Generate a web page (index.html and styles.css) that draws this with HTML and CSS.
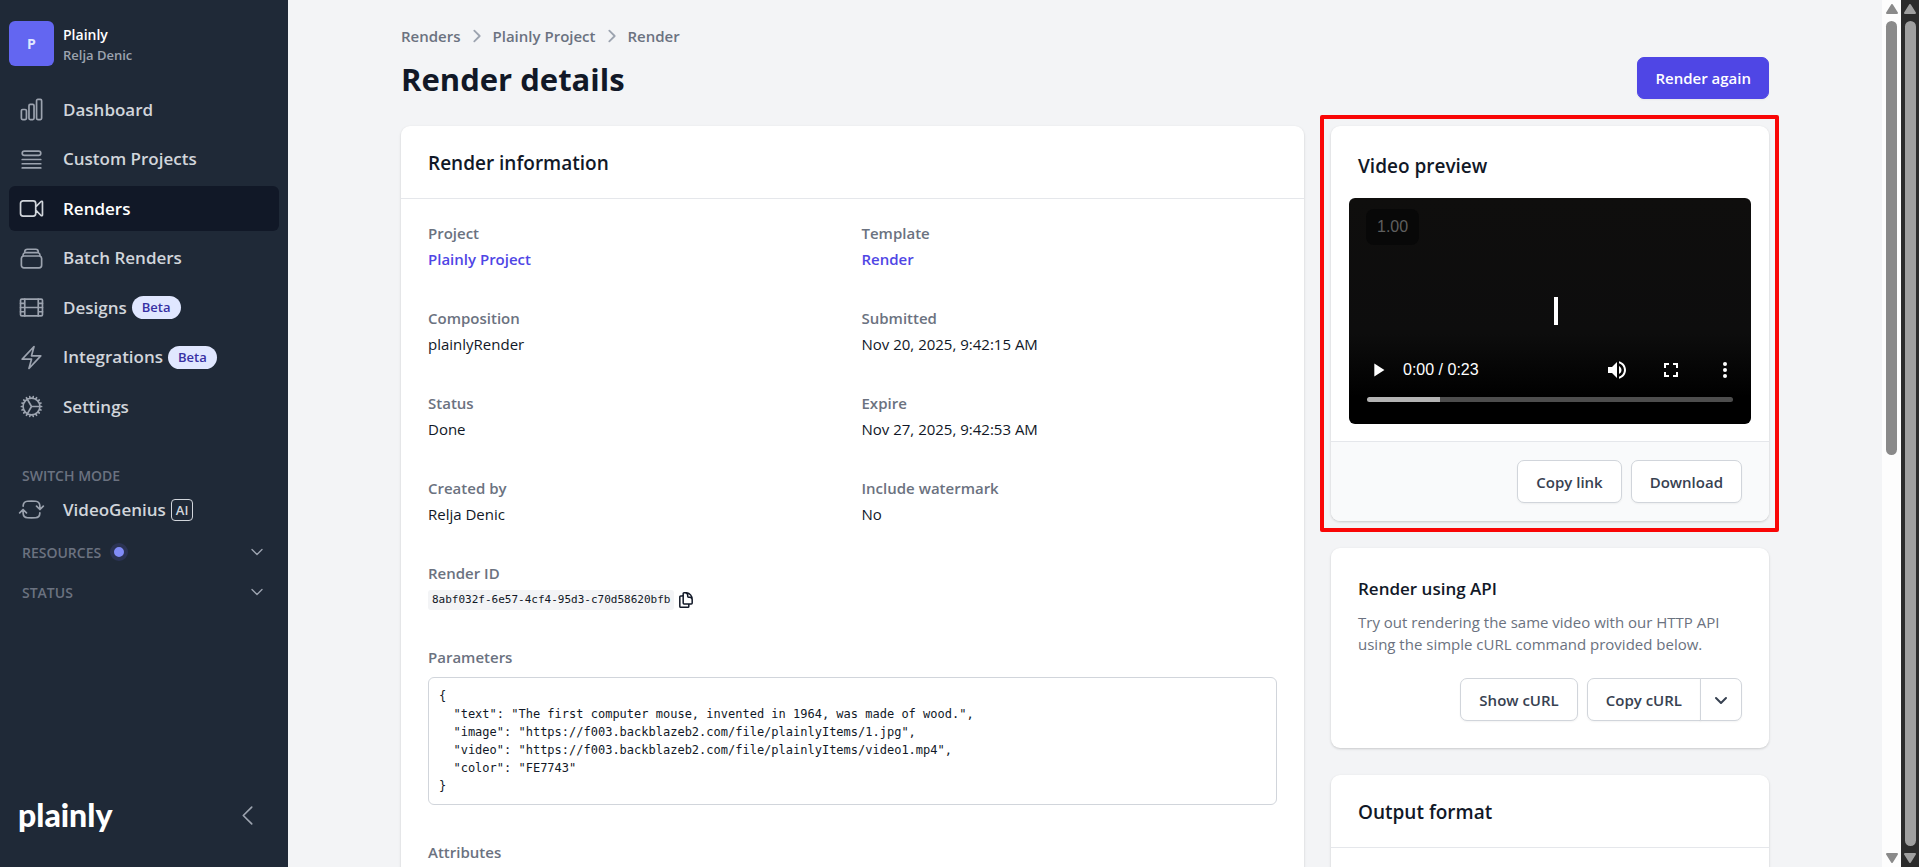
FILE: index.html
```html
<!DOCTYPE html>
<html lang="en">
<head>
<meta charset="utf-8">
<title>Render details</title>
<meta name="viewport" content="width=device-width, initial-scale=1">
<link rel="stylesheet" href="styles.css">
</head>
<body class="app">
<aside class="sidebar">
  <div class="account">
    <span class="avatar">P</span>
    <div>
      <div class="account-name">Plainly</div>
      <div class="account-user">Relja Denic</div>
    </div>
  </div>
  <nav class="nav">
    <a class="nav-item" href="#"><svg class="icon" viewBox="0 0 24 24"><path d="M3 13.125C3 12.504 3.504 12 4.125 12h2.25c.621 0 1.125.504 1.125 1.125v6.75C7.5 20.496 6.996 21 6.375 21h-2.25A1.125 1.125 0 0 1 3 19.875v-6.75ZM9.75 8.625c0-.621.504-1.125 1.125-1.125h2.25c.621 0 1.125.504 1.125 1.125v11.25c0 .621-.504 1.125-1.125 1.125h-2.25a1.125 1.125 0 0 1-1.125-1.125V8.625ZM16.5 4.125c0-.621.504-1.125 1.125-1.125h2.25C20.496 3 21 3.504 21 4.125v15.75c0 .621-.504 1.125-1.125 1.125h-2.25a1.125 1.125 0 0 1-1.125-1.125V4.125Z"/></svg>Dashboard</a>
    <a class="nav-item" href="#"><svg class="icon" viewBox="0 0 24 24"><path d="M3.75 12h16.5m-16.5 3.75h16.5M3.75 19.5h16.5M5.625 4.5h12.75a1.875 1.875 0 0 1 0 3.75H5.625a1.875 1.875 0 0 1 0-3.75Z"/></svg>Custom Projects</a>
    <a class="nav-item nav-active" href="#"><svg class="icon" viewBox="0 0 24 24"><path d="m15.75 10.5 4.72-4.72a.75.75 0 0 1 1.28.53v11.38a.75.75 0 0 1-1.28.53l-4.72-4.72M4.5 18.75h9a2.25 2.25 0 0 0 2.25-2.25v-9a2.25 2.25 0 0 0-2.25-2.25h-9A2.25 2.25 0 0 0 2.25 7.5v9a2.25 2.25 0 0 0 2.25 2.25Z"/></svg>Renders</a>
    <a class="nav-item" href="#"><svg class="icon" viewBox="0 0 24 24"><path d="M6 6.878V6a2.25 2.25 0 0 1 2.25-2.25h7.5A2.25 2.25 0 0 1 18 6v.878m-12 0c.235-.083.487-.128.75-.128h10.5c.263 0 .515.045.75.128m-12 0A2.25 2.25 0 0 0 4.5 9v.878m13.5-3A2.25 2.25 0 0 1 19.5 9v.878m0 0a2.246 2.246 0 0 0-.75-.128H5.25c-.263 0-.515.045-.75.128m15 0A2.25 2.25 0 0 1 21 12v6a2.25 2.25 0 0 1-2.25 2.25H5.25A2.25 2.25 0 0 1 3 18v-6c0-.98.626-1.813 1.5-2.122"/></svg>Batch Renders</a>
    <a class="nav-item" href="#"><svg class="icon" viewBox="0 0 24 24"><rect x="2.25" y="4.5" width="19.5" height="15" rx="1.125"/><path d="M6 4.5v15M18 4.5v15M6 12h12M2.25 8.25H6M2.25 12H6M2.25 15.75H6M18 8.25h3.75M18 12h3.75M18 15.75h3.75"/></svg>Designs<span class="badge">Beta</span></a>
    <a class="nav-item" href="#"><svg class="icon" viewBox="0 0 24 24"><path d="m3.75 13.5 10.5-11.25L12 10.5h8.25L9.75 21.75 12 13.5H3.75Z"/></svg>Integrations<span class="badge">Beta</span></a>
    <a class="nav-item" href="#"><svg class="icon" viewBox="0 0 24 24"><path d="M4.5 12a7.5 7.5 0 0 0 15 0m-15 0a7.5 7.5 0 1 1 15 0m-15 0H3m16.5 0H21m-1.5 0H12m-8.457 3.077 1.41-.513m14.095-5.13 1.41-.513M5.106 17.785l1.15-.964m11.49-9.642 1.149-.964M7.501 19.795l.75-1.3m7.5-12.99.75-1.3m-6.063 16.658.26-1.477m2.605-14.772.26-1.477m0 17.726-.26-1.477M10.698 4.614l-.26-1.477M16.5 19.794l-.75-1.299M7.5 4.205 12 12m6.894 5.785-1.149-.964M6.256 7.178l-1.15-.964m15.352 8.864-1.41-.513M4.954 9.435l-1.41-.514M12.002 12l-3.75 6.495"/></svg>Settings</a>
  </nav>
  <div class="side-heading">SWITCH MODE</div>
  <a class="nav-item" href="#"><svg class="icon" viewBox="0 0 24 24"><path d="M19.5 12c0-1.232-.046-2.453-.138-3.662a4.006 4.006 0 0 0-3.7-3.7 48.678 48.678 0 0 0-7.324 0 4.006 4.006 0 0 0-3.7 3.7c-.017.22-.032.441-.046.662M19.5 12l3-3m-3 3-3-3m-12 3c0 1.232.046 2.453.138 3.662a4.006 4.006 0 0 0 3.7 3.7 48.656 48.656 0 0 0 7.324 0 4.006 4.006 0 0 0 3.7-3.7c.017-.22.032-.441.046-.662M4.5 12l3 3m-3-3-3 3"/></svg>VideoGenius<span class="ai">AI</span></a>
  <button class="side-toggle" type="button">RESOURCES<span class="dot"></span><svg class="chevron" viewBox="0 0 24 24"><path d="m19.5 8.25-7.5 7.5-7.5-7.5"/></svg></button>
  <button class="side-toggle" type="button">STATUS<svg class="chevron" viewBox="0 0 24 24"><path d="m19.5 8.25-7.5 7.5-7.5-7.5"/></svg></button>
  <div class="side-foot">
    <span class="logo">plainly</span>
    <button class="collapse" type="button" aria-label="Collapse sidebar"><svg class="icon" viewBox="0 0 24 24"><path d="M15.75 19.5 8.25 12l7.5-7.5"/></svg></button>
  </div>
</aside>

<main class="main">
  <div class="content">
    <nav class="crumbs" aria-label="Breadcrumb">
      <a href="#">Renders</a>
      <svg class="crumb-sep" viewBox="0 0 20 20"><path d="m7 4 6 6-6 6"/></svg>
      <a href="#">Plainly Project</a>
      <svg class="crumb-sep" viewBox="0 0 20 20"><path d="m7 4 6 6-6 6"/></svg>
      <a href="#">Render</a>
    </nav>
    <header class="page-head">
      <h1 class="title">Render details</h1>
      <button class="btn btn-primary" type="button">Render again</button>
    </header>
    <div class="columns">
      <section class="card">
        <h2 class="card-head">Render information</h2>
        <dl class="facts">
          <div><dt>Project</dt><dd><a class="link" href="#">Plainly Project</a></dd></div>
          <div><dt>Template</dt><dd><a class="link" href="#">Render</a></dd></div>
          <div><dt>Composition</dt><dd>plainlyRender</dd></div>
          <div><dt>Submitted</dt><dd>Nov 20, 2025, 9:42:15 AM</dd></div>
          <div><dt>Status</dt><dd>Done</dd></div>
          <div><dt>Expire</dt><dd>Nov 27, 2025, 9:42:53 AM</dd></div>
          <div><dt>Created by</dt><dd>Relja Denic</dd></div>
          <div><dt>Include watermark</dt><dd>No</dd></div>
          <div class="wide"><dt>Render ID</dt><dd class="id-row"><code class="id">8abf032f-6e57-4cf4-95d3-c70d58620bfb</code><button class="copy" type="button" aria-label="Copy render ID"><svg viewBox="0 0 24 24"><path d="M15.75 17.25v3.375c0 .621-.504 1.125-1.125 1.125h-9.75a1.125 1.125 0 0 1-1.125-1.125V7.875c0-.621.504-1.125 1.125-1.125H6.75a9.06 9.06 0 0 1 1.5.124m7.5 10.376h3.375c.621 0 1.125-.504 1.125-1.125V11.25c0-4.46-3.243-8.161-7.5-8.876a9.06 9.06 0 0 0-1.5-.124H9.375c-.621 0-1.125.504-1.125 1.125v3.5m7.5 10.375H9.375a1.125 1.125 0 0 1-1.125-1.125v-9.25m12 6.625v-1.875a3.375 3.375 0 0 0-3.375-3.375h-1.5a1.125 1.125 0 0 1-1.125-1.125v-1.5a3.375 3.375 0 0 0-3.375-3.375H9.75"/></svg></button></dd></div>
          <div class="wide"><dt>Parameters</dt><dd><pre class="code">{
  "text": "The first computer mouse, invented in 1964, was made of wood.",
  "image": "https://f003.backblazeb2.com/file/plainlyItems/1.jpg",
  "video": "https://f003.backblazeb2.com/file/plainlyItems/video1.mp4",
  "color": "FE7743"
}</pre></dd></div>
          <div class="wide"><dt>Attributes</dt></div>
        </dl>
      </section>

      <div class="side">
        <section class="card highlighted">
          <h2 class="video-title">Video preview</h2>
          <div class="player">
            <span class="speed">1.00</span>
            <span class="caret"></span>
            <div class="controls">
              <button class="ctl play" type="button" aria-label="Play"><svg viewBox="0 0 24 24"><path d="M8 5v14l11-7z"/></svg></button>
              <span class="time">0:00 / 0:23</span>
              <button class="ctl" type="button" aria-label="Mute"><svg viewBox="0 0 24 24"><path d="M3 9v6h4l5 5V4L7 9H3zm13.5 3c0-1.77-1.02-3.29-2.5-4.03v8.05c1.48-.73 2.5-2.25 2.5-4.02zM14 3.23v2.06c2.89.86 5 3.54 5 6.71s-2.11 5.85-5 6.71v2.06c4.01-.91 7-4.49 7-8.77s-2.99-7.86-7-8.77z"/></svg></button>
              <button class="ctl" type="button" aria-label="Full screen"><svg viewBox="0 0 24 24"><path d="M7 14H5v5h5v-2H7v-3zm-2-4h2V7h3V5H5v5zm12 7h-3v2h5v-5h-2v3zM14 5v2h3v3h2V5h-5z"/></svg></button>
              <button class="ctl" type="button" aria-label="More options"><svg viewBox="0 0 24 24"><circle cx="12" cy="6" r="2"/><circle cx="12" cy="12" r="2"/><circle cx="12" cy="18" r="2"/></svg></button>
            </div>
            <input class="seek" type="range" min="0" max="23" value="0" aria-label="Seek">
          </div>
          <footer class="card-foot">
            <button class="btn" type="button">Copy link</button>
            <button class="btn" type="button">Download</button>
          </footer>
        </section>

        <section class="card api">
          <h3 class="api-title">Render using API</h3>
          <p class="api-text">Try out rendering the same video with our HTTP API using the simple cURL command provided below.</p>
          <div class="actions">
            <button class="btn" type="button">Show cURL</button>
            <div class="split">
              <button class="btn" type="button">Copy cURL</button>
              <button class="btn btn-more" type="button" aria-label="More copy options"><svg viewBox="0 0 20 20"><path d="m5 8 5 5 5-5"/></svg></button>
            </div>
          </div>
        </section>

        <section class="card output">
          <h2 class="card-head">Output format</h2>
        </section>
      </div>
    </div>
  </div>
</main>

<div class="scroll scroll-inner" aria-hidden="true">
  <svg class="arrow" viewBox="0 0 12 10"><path d="M6 1 11 9H1z"/></svg>
  <div class="track"><div class="thumb"></div></div>
  <svg class="arrow" viewBox="0 0 12 10"><path d="M6 9 1 1h10z"/></svg>
</div>
<div class="scroll scroll-outer" aria-hidden="true">
  <svg class="arrow" viewBox="0 0 12 10"><path d="M6 1 11 9H1z"/></svg>
  <div class="track"><div class="thumb"></div></div>
  <svg class="arrow" viewBox="0 0 12 10"><path d="M6 9 1 1h10z"/></svg>
</div>
</body>
</html>
```
FILE: styles.css
```css
*, *::before, *::after { box-sizing: border-box; }
h1, h2, h3, p, dl, dd, pre { margin: 0; }
a { color: inherit; text-decoration: none; }
button { font: inherit; color: inherit; background: none; border: 0; padding: 0; cursor: pointer; }
svg { display: block; flex: none; }

.app {
  margin: 0;
  display: flex;
  height: 100vh;
  overflow: hidden;
  background: #f3f4f6;
  color: #111827;
  font-family: "Open Sans", "Noto Sans", sans-serif;
  font-size: 15px;
  line-height: 22px;
}

/* Sidebar */
.sidebar {
  flex: none;
  width: 288px;
  padding: 21px 9px 27px;
  display: flex;
  flex-direction: column;
  background: #1f2937;
  color: #d1d5db;
  font-weight: 600;
}
.account { display: flex; align-items: center; gap: 9px; margin-bottom: 21px; }
.account > div { padding-top: 2px; }
.avatar {
  width: 45px; height: 45px; border-radius: 6px;
  display: grid; place-items: center;
  background: #6366f1; color: #e0e7ff; font-size: 14px; font-weight: 700;
}
.account-name { color: #fff; font-size: 14px; line-height: 20px; }
.account-user { color: #9ca3af; font-size: 13px; line-height: 20px; }
.nav { display: flex; flex-direction: column; justify-content: space-between; min-height: 342px; margin-bottom: 35px; }
.nav-item {
  display: flex; align-items: center;
  height: 45px; padding: 0 9px; border-radius: 6px;
  font-size: 17px;
}
.nav-active { background: #111827; color: #fff; }
.icon { width: 27px; height: 27px; margin-right: 18px; fill: none; stroke: #9ca3af; stroke-width: 1.5; stroke-linecap: round; stroke-linejoin: round; }
.nav-active .icon { stroke: #d1d5db; }
.badge {
  margin-left: 5px; padding: 0 10px; border-radius: 12px;
  background: #e0e7ff; color: #3730a3;
  font-size: 13px; line-height: 23px;
}
.ai { margin-left: 5px; padding: 0 4px; border: 1px solid #d1d5db; border-radius: 4px; font-size: 13px; line-height: 20px; }
.side-heading, .side-toggle { padding-left: 13px; color: #6b7280; font-size: 14px; line-height: 23px; font-weight: 600; }
.side-toggle { display: flex; align-items: center; height: 40px; padding-right: 14px; text-align: left; }
.dot { width: 18px; height: 18px; margin-left: 9px; border: 4px solid #2b3353; border-radius: 50%; background: #818cf8; }
.chevron { width: 16px; height: 16px; margin-left: auto; fill: none; stroke: #9ca3af; stroke-width: 2; stroke-linecap: round; stroke-linejoin: round; }
.side-foot { margin-top: auto; padding: 0 9px; display: flex; align-items: center; justify-content: space-between; }
.logo { color: #fff; font: 900 32px/50px Lato, "Open Sans", sans-serif; }
.collapse { padding: 0 9px 0 0; }
.collapse .icon { margin: 0; }

/* Page */
.main { flex: 1; min-width: 0; padding: 25px 36px; overflow: hidden; }
.content { max-width: 1368px; margin: 0 auto; }
.crumbs { display: flex; align-items: center; gap: 7px; color: #6b7280; font-weight: 600; }
.crumb-sep { width: 18px; height: 18px; fill: none; stroke: #9ca3af; stroke-width: 2; stroke-linecap: round; stroke-linejoin: round; }
.page-head { display: flex; align-items: center; justify-content: space-between; margin: 10px 0 27px; }
.title { padding-top: 2px; font-size: 31px; line-height: 40px; font-weight: 700; }
.btn {
  height: 43px; padding: 0 18px;
  border: 1px solid #d1d5db; border-radius: 7px;
  background: #fff; color: #374151;
  font-size: 15px; font-weight: 600; white-space: nowrap;
  box-shadow: 0 1px 2px rgba(0, 0, 0, .05);
}
.btn-primary { height: 42px; padding: 0 17px; background: #4f46e5; border-color: #4f46e5; color: #fff; }
.columns { display: grid; grid-template-columns: repeat(3, 1fr); gap: 27px; align-items: start; }
.columns > .card { grid-column: span 2; min-height: 900px; }
.side { display: flex; flex-direction: column; gap: 27px; }
.card { background: #fff; border-radius: 9px; box-shadow: 0 1px 3px rgba(0, 0, 0, .12), 0 1px 2px rgba(0, 0, 0, .06); }
.card-head { padding: 24px 27px 21px; border-bottom: 1px solid #e5e7eb; font-size: 19px; line-height: 27px; font-weight: 600; }

.facts { display: grid; grid-template-columns: 1fr 1fr; gap: 36px 18px; padding: 23px 27px; }
.wide { grid-column: 1 / -1; }
.facts dt { color: #6b7280; font-weight: 600; line-height: 22px; margin-bottom: 4px; }
.facts dd { font-weight: 500; line-height: 23px; }
.facts .link { color: #4f46e5; font-weight: 600; }
.id-row { display: flex; align-items: center; gap: 3px; padding-top: 2px; }
.id { padding: 0 4px; background: #f3f4f6; border-radius: 3px; font: 11px/20px "DejaVu Sans Mono", monospace; }
.copy svg { width: 18px; height: 18px; fill: none; stroke: #111827; stroke-width: 2; stroke-linejoin: round; stroke-linecap: round; }
.code { margin-top: 9px; padding: 9px 10px; border: 1px solid #d1d5db; border-radius: 6px; font: 12px/18px "DejaVu Sans Mono", monospace; }

/* Video card */
.highlighted { position: relative; }
.highlighted::after { content: ""; position: absolute; inset: -11px -10px -11px -11px; border: 4px solid #f90606; border-radius: 2px; pointer-events: none; }
.video-title { padding: 27px 27px 18px; font-size: 19px; line-height: 27px; font-weight: 600; }
.player {
  position: relative;
  margin: 0 18px 17px; aspect-ratio: 402 / 226; padding: 0 18px 18px;
  display: flex; flex-direction: column; justify-content: flex-end;
  border-radius: 6px; overflow: hidden;
  background: linear-gradient(#0f0e0d 0%, #0d0d0d 60%, #000 88%);
}
.speed { position: absolute; left: 17px; top: 11px; padding: 0 11px; border-radius: 8px; background: #080808; color: #5f5f5f; font: 16px/36px "Liberation Sans", sans-serif; }
.caret { position: absolute; left: 51%; top: 44%; width: 4px; height: 28px; background: #fff; }
.controls { display: flex; align-items: center; gap: 30px; margin-right: -4px; }
.ctl svg { width: 24px; height: 24px; fill: #fff; }
.play svg { width: 22px; height: 22px; }
.play { margin-right: -16px; }
.time { margin-right: auto; color: #fff; font: 16px/36px "Liberation Sans", sans-serif; }
.seek { appearance: none; width: 100%; height: 5px; margin: 9px 0 4px; border-radius: 3px; background: linear-gradient(90deg, #b3b3b3 20%, #4d4d4d 20%); }
.seek::-webkit-slider-thumb { appearance: none; width: 0; height: 0; }
.card-foot, .actions { display: flex; justify-content: flex-end; gap: 9px; }
.card-foot { padding: 18px 27px; border-top: 1px solid #e5e7eb; background: #f9fafb; border-radius: 0 0 9px 9px; }

/* API card */
.api { padding: 27px; }
.api-title { font-size: 17px; line-height: 27px; font-weight: 600; }
.api-text { margin: 9px 0 23px; color: #6b7280; line-height: 22px; }
.split { display: flex; }
.split .btn:first-child { border-radius: 7px 0 0 7px; }
.split .btn-more { margin-left: -1px; padding: 0 10px; border-radius: 0 7px 7px 0; }
.btn-more svg { width: 20px; height: 20px; fill: none; stroke: #374151; stroke-width: 2; stroke-linecap: round; stroke-linejoin: round; }
.output { min-height: 200px; }

/* Scroll rails */
.scroll { flex: none; display: flex; flex-direction: column; align-items: center; gap: 7px; padding: 4px 0; }
.arrow { width: 12px; height: 10px; fill: currentColor; stroke: currentColor; stroke-width: 2; stroke-linejoin: round; }
.track { flex: 1; width: 11px; }
.thumb { height: 100%; border-radius: 6px; background: currentColor; }
.scroll-inner { width: 19px; background: #fdfdfd; color: #8a8a8a; }
.scroll-inner .thumb { height: 52.6%; }
.scroll-outer { width: 18px; background: #2b2b2b; color: #9f9f9f; }
```
